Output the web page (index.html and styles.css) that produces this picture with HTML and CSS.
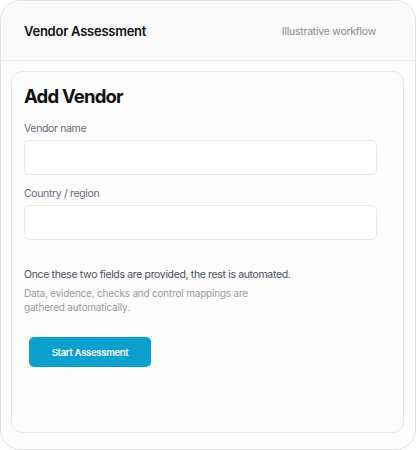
FILE: index.html
```html
<!DOCTYPE html>
<html lang="en">
<head>
<meta charset="utf-8">
<link rel="stylesheet" href="styles.css">
</head>
<body>
<div class="frame">
  <header class="topbar">
    <div class="title">Vendor Assessment</div>
    <div class="subtitle">Illustrative workflow</div>
  </header>
  <main class="main">
    <section class="card">
      <h1 class="heading">Add Vendor</h1>
      <label class="field">
        <span class="label">Vendor name</span>
        <span class="input"></span>
      </label>
      <label class="field">
        <span class="label">Country / region</span>
        <span class="input"></span>
      </label>
      <p class="note">Once these two fields are provided, the rest is automated.</p>
      <p class="hint">Data, evidence, checks and control mappings are<br>gathered automatically.</p>
      <button class="btn" type="button">Start Assessment</button>
    </section>
  </main>
</div>
</body>
</html>
```

FILE: styles.css
```css
* { box-sizing: border-box; }
html, body { margin: 0; padding: 0; background: #ffffff; }
body { font-family: Inter, "Noto Sans", sans-serif; }

.frame {
  width: 416px;
  height: 450px;
  border: 1px solid #e0e0e0;
  border-radius: 20px;
  overflow: hidden;
  background: #fcfcfc;
  display: flex;
  flex-direction: column;
}

.topbar {
  height: 60px;
  flex: none;
  border-bottom: 1px solid #e6e6e6;
  background: #fafafa;
  display: flex;
  align-items: center;
  justify-content: space-between;
  padding: 1px 39px 0 23px;
}
.title { font-size: 13px; font-weight: 600; color: #111; letter-spacing: -0.25px; }
.subtitle { font-size: 10.5px; color: #8a8a8a; letter-spacing: -0.25px; }

.main {
  flex: 1;
  display: flex;
  padding: 10px 11px 16px 10px;
}
.card {
  flex: 1;
  border: 1px solid #e6e6e6;
  border-radius: 11px;
  background: #fcfcfc;
  padding: 12px 26px 0 12px;
  display: flex;
  flex-direction: column;
}
.heading {
  margin: 0 0 14px;
  font-size: 18.5px;
  font-weight: 700;
  color: #111;
  line-height: 24px;
  letter-spacing: -0.8px;
}
.field { display: flex; flex-direction: column; margin-bottom: 12px; }
.label { font-size: 10.5px; color: #686c7c; line-height: 14px; margin-bottom: 4px; letter-spacing: -0.35px; }
.input {
  height: 35px;
  border: 1px solid #e8e8e8;
  border-radius: 6px;
  background: #ffffff;
}
.note {
  margin: 16px 0 0;
  font-size: 10.5px;
  color: #4b4f5e;
  line-height: 14px;
  letter-spacing: -0.35px;
}
.hint {
  margin: 4px 0 0;
  font-size: 10px;
  color: #9a9a9a;
  line-height: 14px;
  letter-spacing: -0.2px;
}
.btn {
  align-self: flex-start;
  margin: 23px 0 0 5px;
  width: 122px;
  height: 30px;
  border: none;
  border-radius: 5px;
  background: #0a9fcd;
  color: #ffffff;
  font-family: Inter, "Noto Sans", sans-serif;
  font-size: 9.5px;
  font-weight: 600;
  letter-spacing: -0.3px;
  cursor: pointer;
}
```
